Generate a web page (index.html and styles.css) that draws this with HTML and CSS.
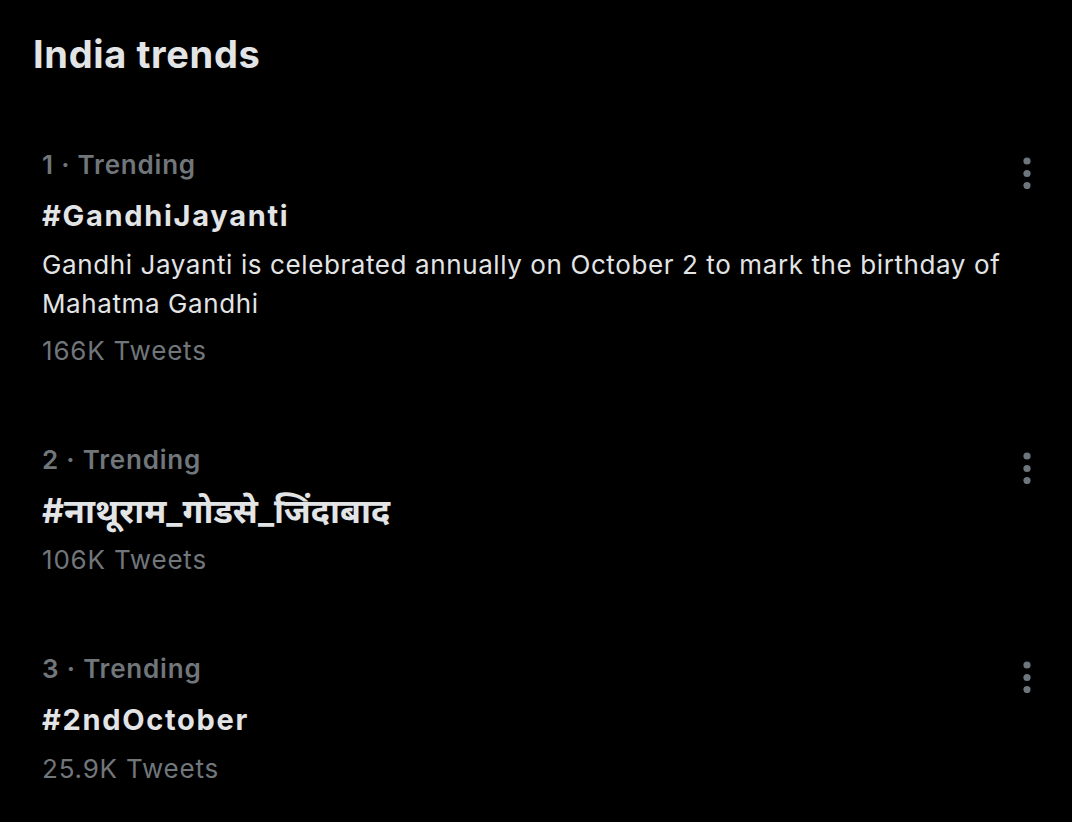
FILE: index.html
```html
<!DOCTYPE html>
<html lang="en">
<head>
<meta charset="utf-8">
<title>India trends</title>
<link rel="stylesheet" href="styles.css">
</head>
<body>
<main class="panel">
  <h1 class="title">India trends</h1>
  <section class="trends">
    <article class="trend">
      <div class="trend-body">
        <div class="meta">1 · Trending</div>
        <div class="tag">#GandhiJayanti</div>
        <p class="desc">Gandhi Jayanti is celebrated annually on October 2 to mark the birthday of Mahatma Gandhi</p>
        <div class="count">166K Tweets</div>
      </div>
      <button class="more" aria-label="More"><svg viewBox="0 0 8 32" width="8" height="32"><circle cx="4" cy="4" r="3.6"/><circle cx="4" cy="16.5" r="3.6"/><circle cx="4" cy="28.5" r="3.6"/></svg></button>
    </article>
    <article class="trend">
      <div class="trend-body">
        <div class="meta">2 · Trending</div>
        <div class="tag tag-hi" lang="hi">#नाथूराम_गोडसे_जिंदाबाद</div>
        <div class="count">106K Tweets</div>
      </div>
      <button class="more" aria-label="More"><svg viewBox="0 0 8 32" width="8" height="32"><circle cx="4" cy="4" r="3.6"/><circle cx="4" cy="16.5" r="3.6"/><circle cx="4" cy="28.5" r="3.6"/></svg></button>
    </article>
    <article class="trend">
      <div class="trend-body">
        <div class="meta">3 · Trending</div>
        <div class="tag">#2ndOctober</div>
        <div class="count">25.9K Tweets</div>
      </div>
      <button class="more" aria-label="More"><svg viewBox="0 0 8 32" width="8" height="32"><circle cx="4" cy="4" r="3.6"/><circle cx="4" cy="16.5" r="3.6"/><circle cx="4" cy="28.5" r="3.6"/></svg></button>
    </article>
  </section>
</main>
</body>
</html>
```

FILE: styles.css
```css
html, body {
  margin: 0;
  padding: 0;
  background: #000;
}
body {
  width: 1072px;
  height: 822px;
  overflow: hidden;
  font-family: Inter, "Noto Sans", "Noto Sans Devanagari", sans-serif;
  color: #e2e4e5;
}
.panel {
  padding: 31px 0 0 33px;
}
.title {
  margin: 0;
  font-size: 38px;
  line-height: 46px;
  font-weight: 700;
  letter-spacing: 0.65px;
  color: #e2e4e5;
}
.trends {
  display: flex;
  flex-direction: column;
  gap: 70px;
  margin-top: 68px;
  padding-left: 9px;
}
.trend {
  display: flex;
  align-items: flex-start;
}
.trend-body {
  flex: 1;
  min-width: 0;
  display: flex;
  flex-direction: column;
}
.meta {
  font-size: 26px;
  line-height: 39px;
  font-weight: 600;
  letter-spacing: 0.8px;
  color: #71767b;
}
.tag {
  margin-top: 12px;
  font-size: 29px;
  line-height: 39px;
  font-weight: 700;
  letter-spacing: 1.7px;
  color: #e2e4e5;
}
.tag-hi {
  font-size: 34px;
  letter-spacing: 0;
}
.desc {
  margin: 10px 0 0;
  font-size: 26px;
  line-height: 39px;
  letter-spacing: 0.6px;
  color: #e2e4e5;
}
.count {
  margin-top: 8px;
  font-size: 26px;
  line-height: 39px;
  letter-spacing: 0.8px;
  color: #71767b;
}
.trend .tag + .count {
  margin-top: 10px;
}
.more {
  flex: none;
  margin: 12px 41px 0 0;
  padding: 0;
  border: 0;
  background: transparent;
  fill: #6e767d;
  line-height: 0;
}
```
